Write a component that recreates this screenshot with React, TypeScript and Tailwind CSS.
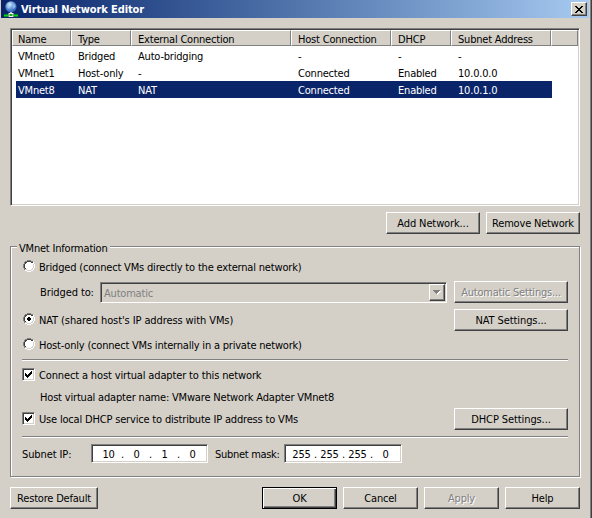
import React from "react";

const raised =
  "border border-t-white border-l-white border-r-[#404040] border-b-[#404040] shadow-[inset_-1px_-1px_0_#808080]";
const sunken =
  "border border-t-[#808080] border-l-[#808080] border-r-white border-b-white shadow-[inset_1px_1px_0_#404040,inset_-1px_-1px_0_#d4d0c8]";

function Button({
  children,
  className = "",
  disabled = false,
  primary = false,
}: {
  children: React.ReactNode;
  className?: string;
  disabled?: boolean;
  primary?: boolean;
}) {
  const face = primary
    ? "border border-black shadow-[inset_1px_1px_0_white,inset_-1px_-1px_0_#404040,inset_-2px_-2px_0_#808080]"
    : raised;
  return (
    <button
      disabled={disabled}
      className={`flex h-[22px] shrink-0 items-center justify-center pt-px ${face} ${
        disabled ? "text-[#808080] [text-shadow:1px_1px_0_white]" : ""
      } ${className}`}
    >
      {children}
    </button>
  );
}

function Radio({ checked = false }: { checked?: boolean }) {
  return (
    <svg className="mb-[3px] h-3 w-3 shrink-0" viewBox="0 0 12 12" shapeRendering="crispEdges">
      <path d="M4 1h4v1h2v2h1v4h-1v2H8v1H4v-1H2V8H1V4h1V2h2z" fill="white" />
      <path d="M4 0h4v1H4zM2 1h2v1H2zM8 1h2v1H8zM1 2h1v2H1zM0 4h1v4H0zM1 8h1v2H1z" fill="#808080" />
      <path d="M4 1h4v1H4zM2 2h2v1H2zM8 2h2v1H8zM2 3h1v1H2zM1 4h1v4H1zM2 8h1v1H2z" fill="#404040" />
      <path d="M10 4h1v4h-1zM9 8h1v1H9zM2 9h2v1H2zM8 9h2v1H8zM4 10h4v1H4z" fill="#d4d0c8" />
      <path d="M11 4h1v4h-1zM10 8h1v2h-1zM10 2h1v2h-1zM2 10h2v1H2zM8 10h2v1H8zM4 11h4v1H4z" fill="white" />
      {checked && <path d="M5 4h2v1h1v2H7v1H5V7H4V5h1z" fill="black" />}
    </svg>
  );
}

function Check() {
  return (
    <span className={`flex h-[13px] w-[13px] shrink-0 bg-white ${sunken}`}>
      <svg className="ml-[2px] mt-[2px] h-[7px] w-[7px]" viewBox="0 0 7 7" shapeRendering="crispEdges">
        <path d="M0 2h1v1h1v1h1V3h1V2h1V1h1V0h1v3H6v1H5v1H4v1H3v1H2V6H1V5H0z" fill="black" />
      </svg>
    </span>
  );
}

function Rule() {
  return <div className="h-[2px] w-[546px] shrink-0 border-t border-[#808080] bg-white" />;
}

function IpField({ parts, className = "" }: { parts: string[]; className?: string }) {
  return (
    <div className={`flex h-[19px] items-center bg-white pl-[5px] pt-[2px] ${sunken} ${className}`}>
      {parts.map((p, i) => (
        <React.Fragment key={i}>
          {i > 0 && <span className="w-[5px] text-center">.</span>}
          <span className="w-[23px] text-center">{p}</span>
        </React.Fragment>
      ))}
    </div>
  );
}

const columns = [
  ["Name", "w-[60px]", "w-[59px] pl-[5px]"],
  ["Type", "w-[60px]", "w-[60px] pl-[6px]"],
  ["External Connection", "w-[160px]", "w-[160px] pl-[6px]"],
  ["Host Connection", "w-[100px]", "w-[100px] pl-[6px]"],
  ["DHCP", "w-[60px]", "w-[60px] pl-[6px]"],
  ["Subnet Address", "w-[100px]", "w-[100px] pl-[6px]"],
];

const rows = [
  ["VMnet0", "Bridged", "Auto-bridging", "-", "-", "-"],
  ["VMnet1", "Host-only", "-", "Connected", "Enabled", "10.0.0.0"],
  ["VMnet8", "NAT", "NAT", "Connected", "Enabled", "10.0.1.0"],
];

export default function App() {
  return (
    <div className="flex h-[518px] w-[592px] flex-col overflow-hidden whitespace-nowrap border-r border-[#404040] bg-[#d4d0c8] pl-px font-['DejaVu_Sans_Condensed','DejaVu_Sans',sans-serif] text-[11px] leading-[13px] tracking-[-0.2px] text-black [font-stretch:condensed] shadow-[inset_-1px_0_0_#808080]">
      <header className="flex h-[18px] w-[588px] shrink-0 items-center bg-linear-to-r from-[#0a246a] to-[#a6caf0] pl-[2px] pr-[2px]">
        <svg className="h-4 w-4 shrink-0" viewBox="0 0 16 16">
          <defs>
            <radialGradient id="globe" cx="0.4" cy="0.3" r="0.7">
              <stop offset="0" stopColor="#e4f2fc" />
              <stop offset="0.35" stopColor="#7baee4" />
              <stop offset="1" stopColor="#2c5cb8" />
            </radialGradient>
          </defs>
          <circle cx="8" cy="5.8" r="5.6" fill="url(#globe)" />
          <path d="M5 2.5 7 1.6 8 3 6.8 4.5 7.5 6 6 8 4 6zM9.5 4 12 3.5 12.5 6 10.5 8z" fill="#b7d8f2" opacity=".55" />
          <path d="M7 11h2v2H7z" fill="#b8c8c8" />
          <path d="M1 13h5v3H1zM10 13h5v3h-5z" fill="#063c28" />
          <path d="M1 13.5h4v2H1zM11 13.5h4v2h-4z" fill="#00d818" />
          <path d="M5.5 12h5v4h-5z" fill="#e8f0e8" />
          <path d="M6.5 13h3v2h-3z" fill="#10a820" />
        </svg>
        <h1 className="ml-[2px] font-bold tracking-[-0.1px] text-white">Virtual Network Editor</h1>
        <button className={`ml-auto flex h-[14px] w-4 items-center justify-center bg-[#d4d0c8] ${raised}`}>
          <svg className="h-[7px] w-2" viewBox="0 0 8 7" shapeRendering="crispEdges">
            <path d="M0 0h2v1h1v1h2V1h1V0h2v1H7v1H6v1H5v1h1v1h1v1h1v1H6V6H5V5H3v1H2v1H0V6h1V5h1V4h1V3H2V2H1V1H0z" fill="black" />
          </svg>
        </button>
      </header>

      <main className="flex flex-col pl-[9px] pt-[10px]">
        <section className={`flex h-[178px] w-[570px] flex-col bg-white p-px ${sunken}`}>
          <div className="flex h-4 shrink-0 bg-[#d4d0c8]">
            {columns.map(([name, , w]) => (
              <div key={name} className={`${w} border border-b-[#808080] border-l-white border-r-[#808080] border-t-white pt-px leading-[15px]`}>
                {name}
              </div>
            ))}
            <div className="flex-1 border border-b-[#808080] border-l-white border-r-[#808080] border-t-white" />
          </div>
          <div className="flex flex-col pt-px">
            {rows.map((r, i) => (
              <div key={r[0]} className={`ml-1 flex h-[17px] w-[536px] items-center pt-[2px] ${i === 2 ? "bg-[#0a246a] text-white" : ""}`}>
                {r.map((c, j) => (
                  <div key={j} className={`${j === 0 ? "w-[56px] pl-[2px]" : `${columns[j][1]} pl-[6px]`} shrink-0`}>
                    {c}
                  </div>
                ))}
              </div>
            ))}
          </div>
        </section>

        <div className="mt-[6px] flex w-[570px] justify-end gap-[6px]">
          <Button className="w-[94px] tracking-[-0.12px]">Add Network...</Button>
          <Button className="w-[94px]">Remove Network</Button>
        </div>

        <section className="mt-3 flex h-[231px] w-[570px] flex-col border border-[#808080] pl-[11px] shadow-[inset_1px_1px_0_white,1px_1px_0_white]">
          <h2 className="-ml-[5px] -mt-[6px] h-[13px] w-[93px] bg-[#d4d0c8] pl-[2px] pt-px">VMnet Information</h2>
          <label className="ml-px mt-[7px] flex h-[13px] items-center gap-1">
            <Radio />
            <span className="tracking-[-0.18px]">Bridged (connect VMs directly to the external network)</span>
          </label>
          <div className="mt-[7px] flex h-[22px] w-[546px] items-center">
            <span className="ml-[18px] w-[60px] tracking-[-0.1px]">Bridged to:</span>
            <div className={`flex h-[21px] w-[347px] items-center self-end p-px pl-[3px] text-[#808080] ${sunken}`}>
              <span className="flex-1 pt-[2px]">Automatic</span>
              <span className={`flex h-[17px] w-4 items-center justify-center ${raised}`}>
                <svg className="h-[5px] w-2" viewBox="0 0 8 5" shapeRendering="crispEdges">
                  <path d="M1 1h7v1H7v1H6v1H5v1H4V4H3V3H2V2H1z" fill="white" />
                  <path d="M0 0h7v1H6v1H5v1H4v1H3V3H2V2H1V1H0z" fill="#808080" />
                </svg>
              </span>
            </div>
            <Button disabled className="ml-auto w-[114px]">Automatic Settings...</Button>
          </div>
          <div className="mt-[6px] flex h-[22px] w-[546px] items-center justify-between">
            <label className="ml-px flex h-[13px] items-center gap-1">
              <Radio checked />
              <span className="tracking-[-0.1px]">NAT (shared host's IP address with VMs)</span>
            </label>
            <Button className="w-[114px] tracking-[-0.1px]">NAT Settings...</Button>
          </div>
          <label className="ml-px mt-2 flex h-[13px] items-center gap-1">
            <Radio />
            <span>Host-only (connect VMs internally in a private network)</span>
          </label>
          <div className="h-[7px] shrink-0" />
          <Rule />
          <label className="mt-[7px] flex h-[13px] items-center gap-1">
            <Check />
            <span className="pt-[2px] tracking-[-0.14px]">Connect a host virtual adapter to this network</span>
          </label>
          <p className="ml-[18px] mt-[10px] tracking-[-0.18px]">Host virtual adapter name: VMware Network Adapter VMnet8</p>
          <div className="mt-1 flex h-[22px] w-[546px] items-center justify-between">
            <label className="mb-px flex h-[13px] items-center gap-1">
              <Check />
              <span className="pt-[2px] tracking-[-0.18px]">Use local DHCP service to distribute IP address to VMs</span>
            </label>
            <Button className="w-[114px] tracking-[-0.1px]">DHCP Settings...</Button>
          </div>
          <div className="h-[6px] shrink-0" />
          <Rule />
          <div className="mt-[6px] flex h-[19px] items-center">
            <span className="w-[69px] pt-[2px] tracking-[-0.1px]">Subnet IP:</span>
            <IpField className="w-[117px]" parts={["10", "0", "1", "0"]} />
            <span className="ml-[7px] w-[69px] pt-[2px] tracking-[-0.3px]">Subnet mask:</span>
            <IpField className="w-[118px]" parts={["255", "255", "255", "0"]} />
          </div>
        </section>

        <footer className="mt-[10px] flex w-[570px] gap-[6px]">
          <Button className="mr-auto w-[88px]">Restore Default</Button>
          <Button primary className="w-[75px]">OK</Button>
          <Button className="w-[75px]">Cancel</Button>
          <Button disabled className="w-[75px]">Apply</Button>
          <Button className="w-[75px]">Help</Button>
        </footer>
      </main>
    </div>
  );
}
